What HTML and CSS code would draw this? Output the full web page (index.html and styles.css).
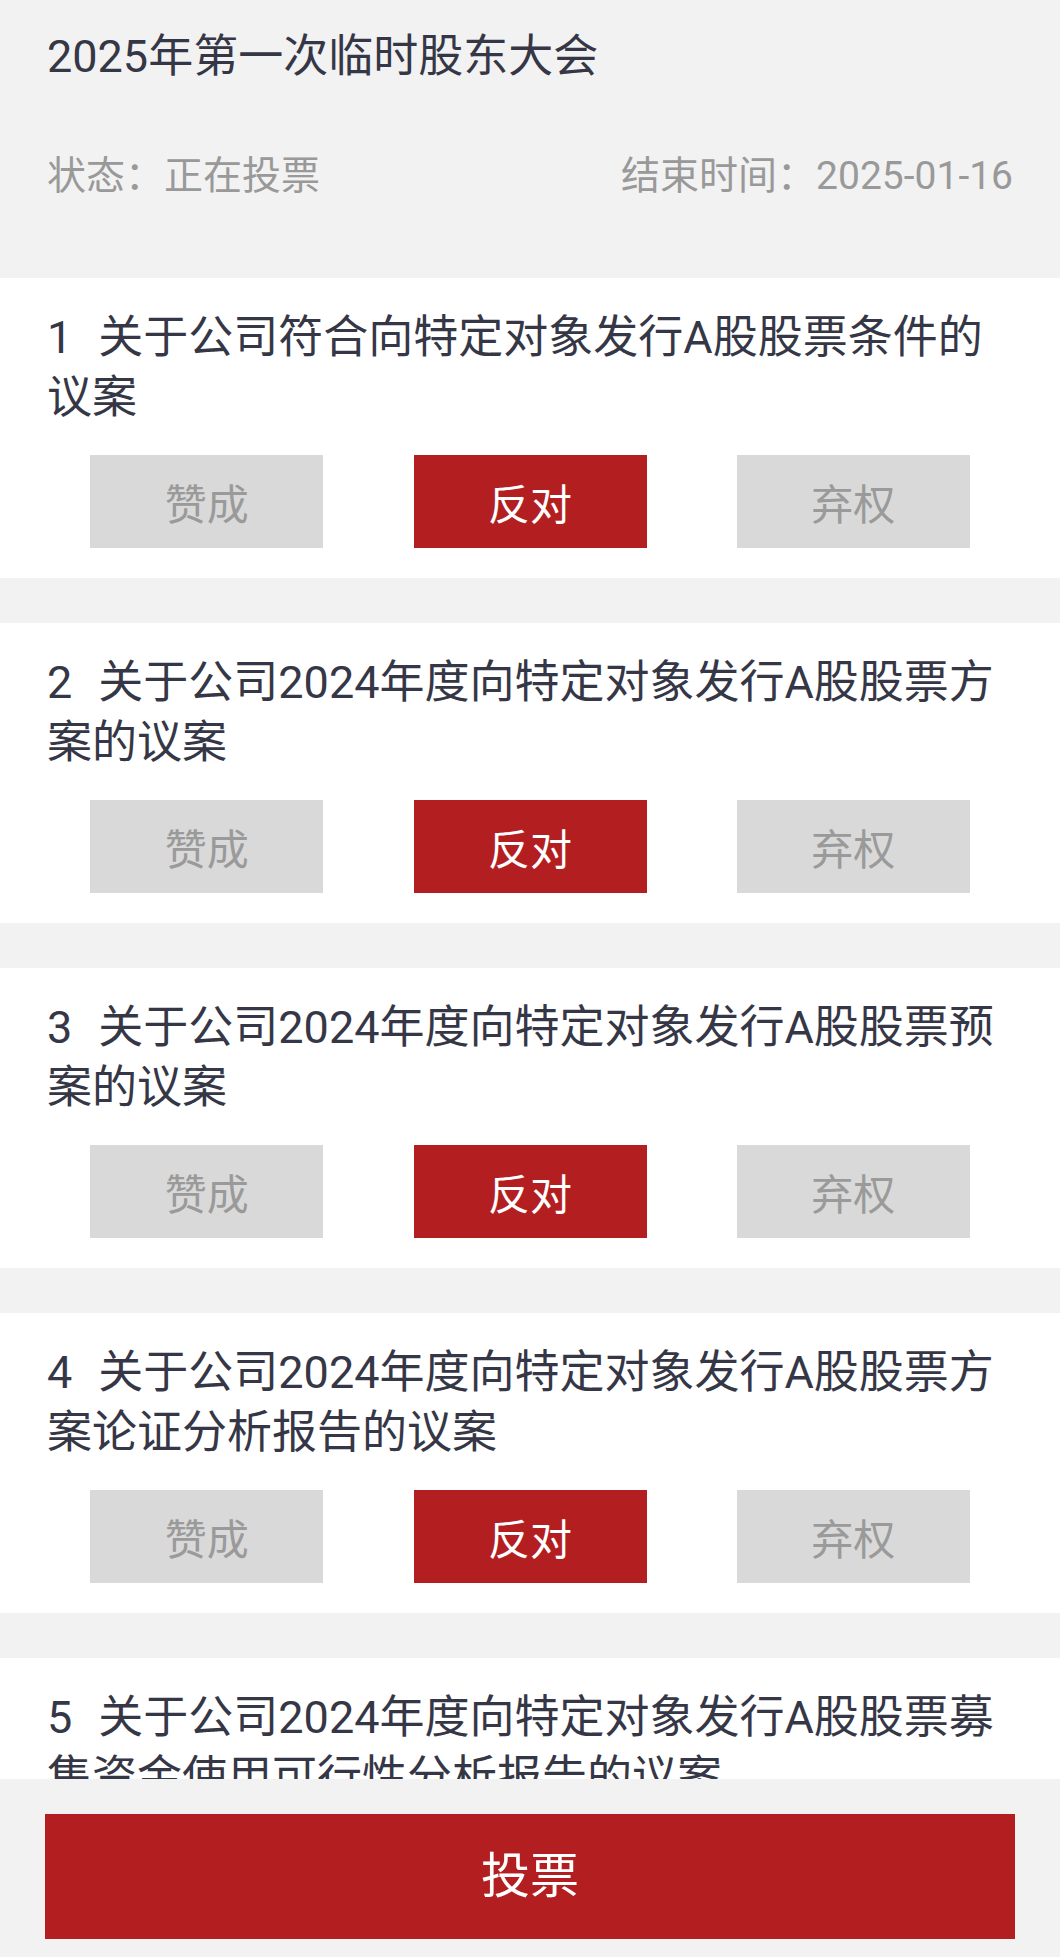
FILE: index.html
```html
<!DOCTYPE html>
<html lang="zh-CN">
<head>
  <meta charset="UTF-8" />
  <meta name="viewport" content="width=device-width, initial-scale=1.0"/>
  <title>股东大会投票</title>
  <link rel="stylesheet" href="styles.css">
</head>
<body>
  <div class="page">
    <main class="content">
      <header class="meeting">
        <h1 class="meeting-title">2025年第一次临时股东大会</h1>
        <div class="meeting-meta">
          <span>状态：正在投票</span>
          <span>结束时间：2025-01-16</span>
        </div>
      </header>

      <section class="motion">
        <p class="motion-title"><span class="motion-no">1</span>关于公司符合向特定对象发行A股股票条件的议案</p>
        <div class="choices">
          <button class="choice">赞成</button>
          <button class="choice choice-on">反对</button>
          <button class="choice">弃权</button>
        </div>
      </section>

      <section class="motion">
        <p class="motion-title"><span class="motion-no">2</span>关于公司2024年度向特定对象发行A股股票方案的议案</p>
        <div class="choices">
          <button class="choice">赞成</button>
          <button class="choice choice-on">反对</button>
          <button class="choice">弃权</button>
        </div>
      </section>

      <section class="motion">
        <p class="motion-title"><span class="motion-no">3</span>关于公司2024年度向特定对象发行A股股票预案的议案</p>
        <div class="choices">
          <button class="choice">赞成</button>
          <button class="choice choice-on">反对</button>
          <button class="choice">弃权</button>
        </div>
      </section>

      <section class="motion">
        <p class="motion-title"><span class="motion-no">4</span>关于公司2024年度向特定对象发行A股股票方案论证分析报告的议案</p>
        <div class="choices">
          <button class="choice">赞成</button>
          <button class="choice choice-on">反对</button>
          <button class="choice">弃权</button>
        </div>
      </section>

      <section class="motion">
        <p class="motion-title"><span class="motion-no">5</span>关于公司2024年度向特定对象发行A股股票募集资金使用可行性分析报告的议案</p>
        <div class="choices">
          <button class="choice">赞成</button>
          <button class="choice choice-on">反对</button>
          <button class="choice">弃权</button>
        </div>
      </section>
    </main>

    <footer class="footer">
      <button class="vote-btn">投票</button>
    </footer>
  </div>
</body>
</html>
```

FILE: styles.css
```css
:root {
  --bg: #f2f2f2;
  --text: #363746;
  --muted: #999999;
  --red: #b31e20;
  --off: #d9d9d9;
}

* {
  box-sizing: border-box;
}

html, body {
  margin: 0;
  height: 100%;
}

body {
  font-family: Roboto, "Noto Sans CJK SC", sans-serif;
  background-color: var(--bg);
  color: var(--text);
}

.page {
  height: 100vh;
  display: flex;
  flex-direction: column;
}

.content {
  flex: 1;
  overflow: hidden;
}

.meeting {
  height: 278px;
  padding: 27px 47px 0;
}

.meeting-title {
  margin: 0;
  font-size: 45px;
  font-weight: 400;
  line-height: 60px;
}

.meeting-meta {
  display: flex;
  justify-content: space-between;
  margin-top: 64px;
  font-size: 39px;
  line-height: 50px;
  color: var(--muted);
}

.motion {
  height: 300px;
  margin-bottom: 45px;
  padding-top: 30px;
  background: #ffffff;
}

.motion-title {
  margin: 0;
  padding: 0 47px;
  font-size: 45px;
  line-height: 60px;
}

.motion-no {
  margin-right: 26px;
}

.choices {
  display: flex;
  justify-content: space-evenly;
  margin-top: 27px;
}

.choice {
  width: 233px;
  height: 93px;
  padding: 0;
  border: none;
  background: var(--off);
  color: #9a9a9a;
  font-family: inherit;
  font-size: 42px;
}

.choice-on {
  background: var(--red);
  color: #ffffff;
}

.footer {
  height: 178px;
  padding: 35px 45px 0;
  background-color: var(--bg);
}

.vote-btn {
  width: 100%;
  height: 125px;
  padding: 0 0 10px;
  border: none;
  background: var(--red);
  color: #ffffff;
  font-family: inherit;
  font-size: 49px;
}
```
